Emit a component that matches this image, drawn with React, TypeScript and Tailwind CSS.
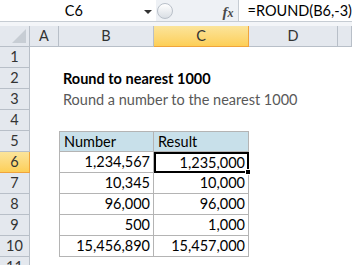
import React from "react";

const cols = ["A", "B", "C", "D", ""];

const rows: { n: number; b?: string; c?: string; kind?: "title" | "sub" | "head" | "data" }[] = [
    { n: 1 },
    { n: 2, b: "Round to nearest 1000", kind: "title" },
    { n: 3, b: "Round a number to the nearest 1000", kind: "sub" },
    { n: 4 },
    { n: 5, b: "Number", c: "Result", kind: "head" },
    { n: 6, b: "1,234,567", c: "1,235,000", kind: "data" },
    { n: 7, b: "10,345", c: "10,000", kind: "data" },
    { n: 8, b: "96,000", c: "96,000", kind: "data" },
    { n: 9, b: "500", c: "1,000", kind: "data" },
    { n: 10, b: "15,456,890", c: "15,457,000", kind: "data" },
    { n: 11 },
];

function FormulaBar() {
    return (
        <div className="flex h-[22px] border-b border-[#c6ccd3] bg-[#eef1f5]">
            <div className="relative flex w-[161px] items-center justify-center bg-white text-[14.5px] text-black">
                <span className="-ml-2">C6</span>
                <span className="absolute right-[4px] top-[10px] h-0 w-0 border-x-[4px] border-t-[4px] border-x-transparent border-t-[#333]" />
            </div>
            <div className="relative w-[85px]">
                <div className="absolute left-[1px] top-[3px] h-[16px] w-[16px] rounded-full border border-[#b9c0c9] bg-gradient-to-b from-white to-[#d9dee4]" />
                <span className="absolute left-[67px] top-[1px] font-['Liberation_Serif',serif] text-[15px] italic font-bold text-[#4a4a4a]">
                    f<span className="text-[12px]">x</span>
                </span>
            </div>
            <div className="flex flex-1 items-center border-l border-[#c6ccd3] bg-white pl-[9px] text-[14.5px] text-black">
                =ROUND(B6,-3)
            </div>
        </div>
    );
}

export default function App() {
    return (
        <div className="h-[265px] w-[352px] overflow-hidden bg-white font-['Lato',sans-serif]">
            <FormulaBar />
            <div className="h-[4px] bg-[#f3f5f8]" />
            <div className="grid grid-cols-[30px_29px_95px_95px_89px_1fr] auto-rows-[21px] text-[14.5px]">
                {/* column headers */}
                <div className="relative border-b border-r border-[#b8bfc8] bg-[#e4e8ee]">
                    <div className="absolute bottom-[3px] right-[3px] h-0 w-0 border-b-[14px] border-l-[14px] border-b-[#c7cdd4] border-l-transparent" />
                </div>
                {cols.map((c, i) =>
                    c === "C" ? (
                        <div
                            key={i}
                            className="flex items-center justify-center border-b border-r border-[#f0a43c] bg-gradient-to-b from-[#fbe49a] to-[#fdcf56] text-[#333]"
                        >
                            {c}
                        </div>
                    ) : (
                        <div
                            key={i}
                            className="flex items-center justify-center border-b border-r border-[#b8bfc8] bg-[#e4e8ee] text-[#333]"
                        >
                            {c}
                        </div>
                    )
                )}

                {rows.map((r) => (
                    <React.Fragment key={r.n}>
                        <div
                            className={
                                r.n === 6
                                    ? "flex items-center justify-center border-b border-r border-[#f0a43c] bg-gradient-to-b from-[#fbe49a] to-[#fdcf56] text-[#333]"
                                    : "flex items-center justify-center border-b border-r border-[#b8bfc8] bg-[#e4e8ee] text-[#333]"
                            }
                        >
                            {r.n}
                        </div>
                        <div />
                        {r.kind === "title" && (
                            <div className="col-span-4 flex items-center pl-[4px] font-bold whitespace-nowrap text-black">
                                {r.b}
                            </div>
                        )}
                        {r.kind === "sub" && (
                            <div className="col-span-4 flex items-center pl-[4px] whitespace-nowrap text-[#595959]">
                                {r.b}
                            </div>
                        )}
                        {r.kind === "head" && (
                            <>
                                <div className="flex items-center border border-[#b4b4b4] bg-[#c8e0ea] pl-[4px] text-black">
                                    {r.b}
                                </div>
                                <div className="flex items-center border-y border-r border-[#b4b4b4] bg-[#c8e0ea] pl-[4px] text-black">
                                    {r.c}
                                </div>
                                <div />
                                <div />
                            </>
                        )}
                        {r.kind === "data" && (
                            <>
                                <div className="flex items-center justify-end border-x border-b border-[#b4b4b4] pr-[3px] text-black">
                                    {r.b}
                                </div>
                                {r.n === 6 ? (
                                    <div className="relative flex items-center justify-end border-2 border-black pr-[2px] text-black">
                                        {r.c}
                                        <span className="absolute -bottom-[4px] -right-[4px] h-[6px] w-[6px] border border-white bg-black" />
                                    </div>
                                ) : (
                                    <div className="flex items-center justify-end border-b border-r border-[#b4b4b4] pr-[3px] text-black">
                                        {r.c}
                                    </div>
                                )}
                                <div />
                                <div />
                            </>
                        )}
                        {!r.kind && (
                            <>
                                <div />
                                <div />
                                <div />
                                <div />
                            </>
                        )}
                    </React.Fragment>
                ))}
            </div>
        </div>
    );
}
